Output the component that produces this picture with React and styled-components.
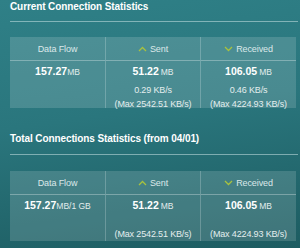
import React from 'react'
import styled, {createGlobalStyle} from 'styled-components'

const Global = createGlobalStyle`
  html, body {
    margin: 0;
    padding: 0;
  }
  body {
    width: 300px;
    height: 248px;
    overflow: hidden;
    font-family: "Liberation Sans", Arial, sans-serif;
    background: linear-gradient(172deg, #2f8087 0%, #2a767d 45%, #1d5c61 100%);
  }
`

const Page = styled.div`
  box-sizing: border-box;
  width: 300px;
  height: 248px;
  padding: 0 2px 0 10px;
  color: #fff;
`

const Section = styled.section`
  margin-top: ${props => props.gap || 0}px;
`

const Title = styled.h2`
  margin: 0;
  font-size: 10px;
  line-height: 14px;
  font-weight: bold;
  letter-spacing: -0.1px;
  color: #fff;
  white-space: nowrap;
`

const Rule = styled.div`
  margin-top: ${props => props.top || 7}px;
  height: 1px;
  background: rgba(200, 225, 227, 0.55);
`

const Table = styled.div`
  margin-top: ${props => props.top || 15}px;
  width: 286px;
  display: grid;
  grid-template-columns: 95px 95px 96px;
  grid-template-rows: 24px ${props => props.bodyHeight}px;
  background: rgba(255, 255, 255, 0.15);
`

const HeadCell = styled.div`
  display: flex;
  align-items: center;
  justify-content: center;
  gap: 3px;
  font-size: 9px;
  letter-spacing: -0.1px;
  color: #dce9ea;
  border-bottom: 1px solid rgba(255, 255, 255, 0.3);
  border-left: ${props => props.first ? 'none' : '1px solid rgba(255, 255, 255, 0.22)'};
`

const BodyCell = styled.div`
  display: flex;
  flex-direction: column;
  align-items: center;
  padding-top: ${props => props.top || 4}px;
  border-left: ${props => props.first ? 'none' : '1px solid rgba(255, 255, 255, 0.22)'};
`

const Value = styled.div`
  font-size: 10.5px;
  line-height: 13px;
  font-weight: bold;
  color: #fff;
  white-space: nowrap;
`

const Unit = styled.span`
  font-size: 8.5px;
  font-weight: normal;
  color: #e2eded;
  margin-left: ${props => props.spaced ? 2 : 0}px;
`

const Rate = styled.div`
  margin-top: 5px;
  height: 13px;
  font-size: 9px;
  line-height: 13px;
  letter-spacing: -0.15px;
  color: #e4eeee;
  white-space: nowrap;
`

const Max = styled(Rate)`
  margin-top: 1px;
`

function Chevron ({up}) {
  return (
    <svg width="9" height="6" viewBox="0 0 9 6">
      <polyline
        points={up ? '1,5 4.5,1.5 8,5' : '1,1 4.5,4.5 8,1'}
        fill="none"
        stroke="#a8c23e"
        strokeWidth="1.3"
      />
    </svg>
  )
}

function StatsTable ({flow, flowUnit, sent, received, sentRate, recvRate, sentMax, recvMax, bodyHeight, top}) {
  return (
    <Table bodyHeight={bodyHeight} top={top}>
      <HeadCell first>Data Flow</HeadCell>
      <HeadCell><Chevron up />Sent</HeadCell>
      <HeadCell><Chevron />Received</HeadCell>
      <BodyCell first>
        <Value>{flow}<Unit>{flowUnit}</Unit></Value>
      </BodyCell>
      <BodyCell>
        <Value>{sent}<Unit spaced>MB</Unit></Value>
        <Rate>{sentRate}</Rate>
        <Max>(Max {sentMax} KB/s)</Max>
      </BodyCell>
      <BodyCell>
        <Value>{received}<Unit spaced>MB</Unit></Value>
        <Rate>{recvRate}</Rate>
        <Max>(Max {recvMax} KB/s)</Max>
      </BodyCell>
    </Table>
  )
}

function App () {
  return (
    <Page>
      <Global />
      <Section>
        <Title>Current Connection Statistics</Title>
        <Rule />
        <StatsTable
          bodyHeight={47}
          flow="157.27"
          flowUnit="MB"
          sent="51.22"
          received="106.05"
          sentRate="0.29 KB/s"
          recvRate="0.46 KB/s"
          sentMax="2542.51"
          recvMax="4224.93"
        />
      </Section>
      <Section gap={24}>
        <Title>Total Connections Statistics (from 04/01)</Title>
        <Rule top={8} />
        <StatsTable
          top={16}
          bodyHeight={46}
          flow="157.27"
          flowUnit="MB/1 GB"
          sent="51.22"
          received="106.05"
          sentRate=""
          recvRate=""
          sentMax="2542.51"
          recvMax="4224.93"
        />
      </Section>
    </Page>
  )
}

export default App
